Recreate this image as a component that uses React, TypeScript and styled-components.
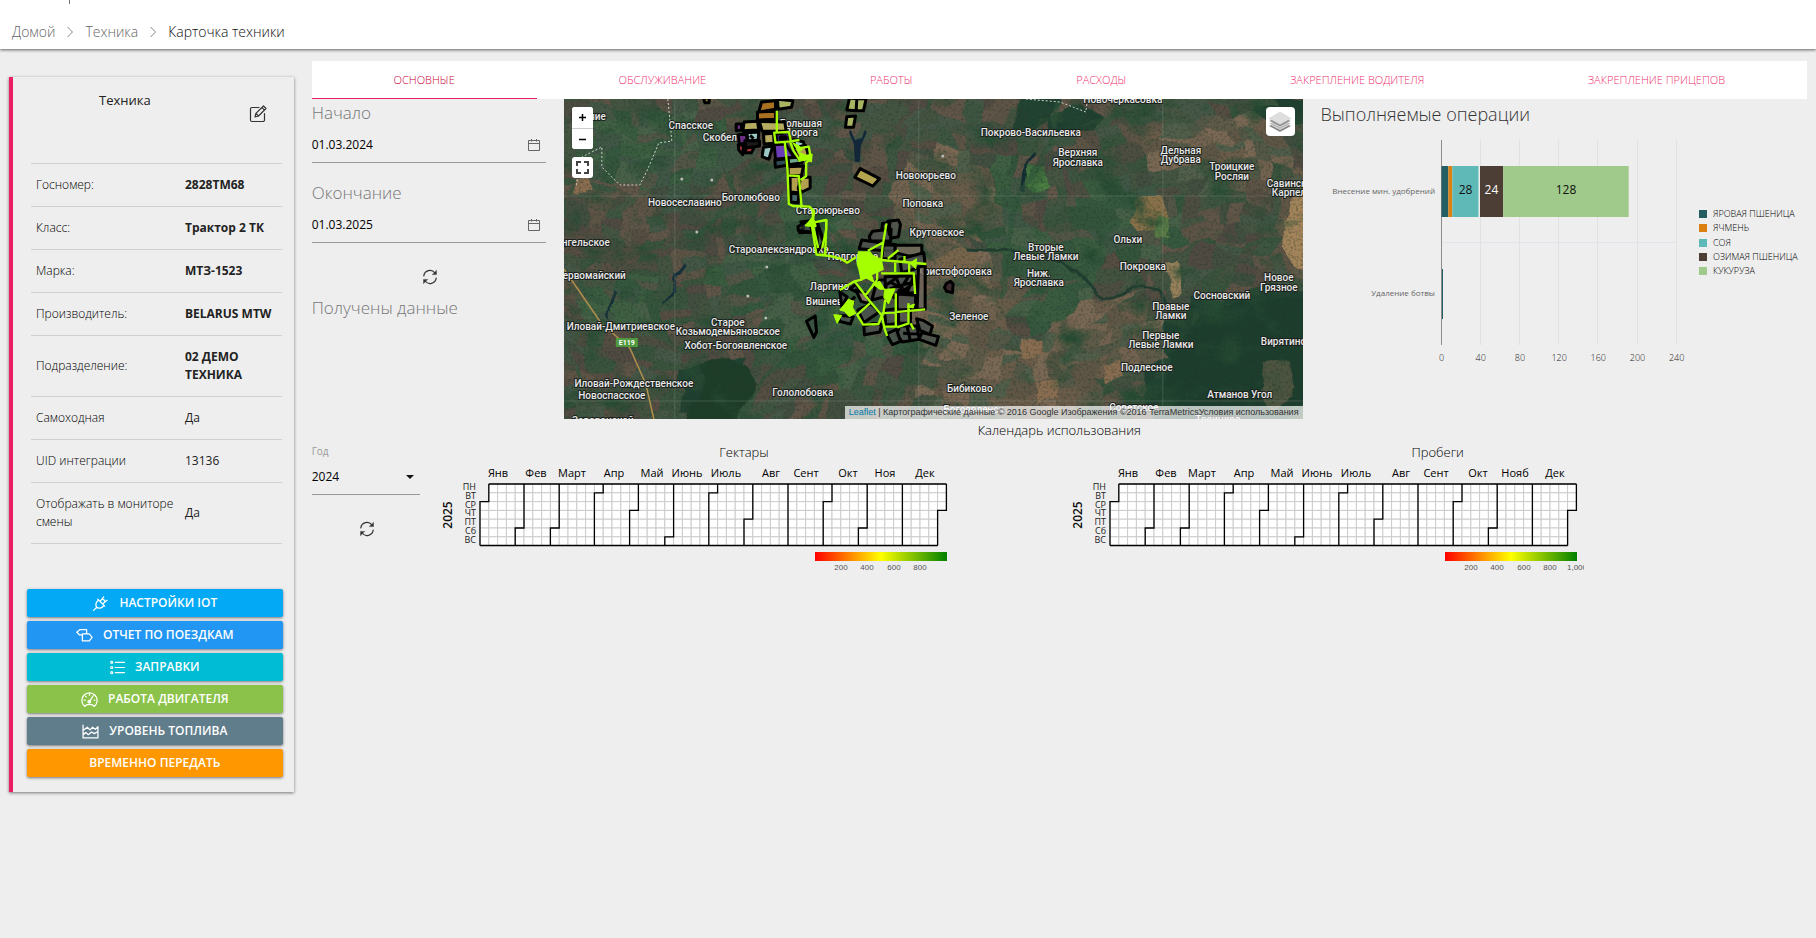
import React from "react";
import styled, { createGlobalStyle } from "styled-components";

const GlobalStyle = createGlobalStyle`
  *, *::before, *::after { box-sizing: border-box; }
  body {
    margin: 0;
    background: #eeeeee;
    color: #212121;
    font-family: "Open Sans", "Noto Sans", sans-serif;
    font-size: 12px;
    line-height: 18px;
  }
  button, input, select { font: inherit; color: inherit; }
  h1, h2, h3, p { margin: 0; font-weight: 400; }
`;

/* ---------- page frame ---------- */

const TopBar = styled.header`
  position: relative;
  height: 49px;
  padding: 15px 12px 0;
  background: #fff;
  box-shadow: 0 1px 3px rgba(0, 0, 0, 0.6);
`;

const ScrolledMark = styled.span`
  position: absolute;
  top: 0;
  left: 69px;
  width: 1px;
  height: 4px;
  background: #777;
`;

const Crumbs = styled.nav`
  display: flex;
  align-items: center;
  gap: 11px;
  height: 34px;
  font-size: 14px;
  font-weight: 300;
`;

const Crumb = styled.a<{ $current?: boolean }>`
  color: ${(p) => (p.$current ? "#111" : "#666")};
  text-decoration: none;
`;

const Page = styled.div`
  display: grid;
  grid-template-columns: repeat(12, minmax(0, 1fr));
  column-gap: 18px;
  align-items: start;
  padding: 12px 9px 40px;
`;

const Main = styled.main`
  grid-column: span 10;
`;

const Grid = styled.div`
  display: grid;
  grid-template-columns: repeat(12, minmax(0, 1fr));
  column-gap: 18px;
`;

const Col = styled.section<{ $span: number }>`
  grid-column: span ${(p) => p.$span};
  min-width: 0;
`;

/* ---------- vehicle card ---------- */

const Card = styled.aside`
  grid-column: span 2;
  margin-top: 16px;
  padding: 0 11px 15px 14px;
  border-left: 4px solid #e91e63;
  box-shadow: 0 1px 3px rgba(0, 0, 0, 0.5);
`;

const CardHead = styled.div`
  display: flex;
  justify-content: space-between;
  height: 86px;
  padding: 14px 16px 0 72px;
`;

const CardTitle = styled.h1`
  font-size: 13px;
  line-height: 18px;
`;

const IconButton = styled.button`
  display: block;
  padding: 0;
  border: 0;
  background: none;
  line-height: 0;
  cursor: pointer;
  color: #333;
`;

const EditButton = styled(IconButton)`
  align-self: flex-start;
  margin-top: 14px;
`;

const Details = styled.table`
  width: calc(100% - 5px);
  margin: 0 0 45px 4px;
  border-collapse: collapse;
  table-layout: fixed;
  border-top: 1px solid #cfcfcf;
  tr { border-bottom: 1px solid #cfcfcf; }
  th, td {
    padding: 12px 0 12px 5px;
    color: #000;
    text-align: left;
    font-weight: 300;
    vertical-align: middle;
  }
  th { width: 149px; }
`;

const Value = styled.td<{ $strong?: boolean }>`
  && {
    font-weight: ${(p) => (p.$strong ? 700 : 400)};
    color: #222;
  }
`;

const Actions = styled.div`
  display: grid;
  gap: 4px;
`;

const Action = styled.button<{ $color: string }>`
  display: flex;
  align-items: center;
  justify-content: center;
  gap: 10px;
  height: 28px;
  border: 0;
  border-radius: 2px;
  background: ${(p) => p.$color};
  color: #fff;
  font-size: 12px;
  font-weight: 600;
  box-shadow: 0 1px 3px rgba(0, 0, 0, 0.5);
  cursor: pointer;
`;

/* ---------- tabs ---------- */

const Tabs = styled.div`
  display: flex;
  height: 38px;
  background: #fff;
`;

const Tab = styled.button<{ $active?: boolean }>`
  flex: 1 1 auto;
  padding: 0;
  border: 0;
  border-bottom: 1px solid ${(p) => (p.$active ? "#e91e63" : "transparent")};
  background: none;
  color: ${(p) => (p.$active ? "#c8003a" : "#ee3070")};
  font-size: 11px;
  font-weight: 300;
  cursor: pointer;
`;

/* ---------- form fields ---------- */

const FieldLabel = styled.label`
  display: block;
  color: #777;
  font-size: 17px;
  font-weight: 300;
  line-height: 28px;
`;

const DateRow = styled.div`
  display: flex;
  align-items: center;
  height: 36px;
  margin-bottom: 16px;
  padding-right: 6px;
  border-bottom: 1px solid #999;
`;

const DateInput = styled.input`
  flex: 1;
  min-width: 0;
  padding: 0;
  border: 0;
  background: none;
  outline: 0;
  color: #000;
  font-size: 12px;
`;

const RefreshRow = styled.div`
  display: flex;
  justify-content: center;
  padding: 10px 0 9px 3px;
`;

const Received = styled.p`
  color: #777;
  font-size: 17px;
  font-weight: 300;
  line-height: 28px;
`;

const SmallLabel = styled.label`
  display: block;
  padding-top: 1px;
  color: #999;
  font-size: 10px;
  line-height: 16px;
`;

const SelectBox = styled.div`
  display: flex;
  align-items: center;
  height: 36px;
  padding-right: 6px;
  border-bottom: 1px solid #999;
  margin-bottom: 16px;
`;

const YearSelect = styled.select`
  flex: 1;
  min-width: 0;
  padding: 0;
  border: 0;
  background: none;
  appearance: none;
  outline: 0;
  color: #000;
`;

/* ---------- map ---------- */

const MapFrame = styled.div`
  position: relative;
  height: 320px;
  overflow: hidden;
  background: #33473a;
`;

const MapSvg = styled.svg`
  display: block;
  width: 100%;
  height: 100%;
`;

const MapControls = styled.div`
  position: absolute;
  top: 8px;
  left: 8px;
  display: grid;
  gap: 8px;
`;

const ControlGroup = styled.div`
  display: grid;
  width: 21px;
  border-radius: 3px;
  overflow: hidden;
  background: #fff;
  button + button { border-top: 1px solid #ccc; }
`;

const MapButton = styled.button`
  display: grid;
  place-items: center;
  height: 21px;
  padding: 0;
  border: 0;
  background: #fff;
  cursor: pointer;
`;

const LayersButton = styled.button`
  position: absolute;
  top: 8px;
  right: 8px;
  display: grid;
  place-items: center;
  width: 29px;
  height: 29px;
  padding: 0;
  border: 0;
  border-radius: 4px;
  background: #fff;
  cursor: pointer;
`;

const Attribution = styled.div`
  position: absolute;
  right: 0;
  bottom: 0;
  padding: 0 4px;
  background: rgba(255, 255, 255, 0.7);
  color: #333;
  font: 9px/13px "Liberation Sans", Arial, sans-serif;
  white-space: nowrap;
  a { color: #0078a8; text-decoration: none; }
`;

/* ---------- headings and charts ---------- */

const ChartTitle = styled.h2`
  padding-top: 1px;
  color: #333;
  font-size: 18px;
  font-weight: 300;
  line-height: 28px;
`;

const SectionTitle = styled.h2`
  color: #000;
  font-size: 13px;
  font-weight: 300;
  line-height: 23px;
  text-align: center;
`;

const CalendarTitle = styled.h3`
  color: #000;
  font-size: 13px;
  font-weight: 300;
  line-height: 21px;
  text-align: center;
`;

const ChartSvg = styled.svg`
  display: block;
  max-width: 100%;
`;

/* ---------- icons ---------- */

type Kids = { children: React.ReactNode };

const Line = ({ size = 16, children }: Kids & { size?: number }) => (
  <svg width={size} height={size} viewBox="0 0 16 16" fill="none" stroke="currentColor" strokeWidth="1.2" strokeLinejoin="round" strokeLinecap="round" aria-hidden="true">
    {children}
  </svg>
);

const EditIcon = () => (
  <svg width="18" height="18" viewBox="0 0 18 18" fill="none" stroke="#333" strokeWidth="1.2" strokeLinejoin="round" strokeLinecap="round" aria-hidden="true">
    <path d="M10 2.5H3A1.500 1.500 0 0 0 1.500 4v11A1.500 1.500 0 0 0 3 16.500h11a1.500 1.500 0 0 0 1.500-1.500V8.500" />
    <path d="M6 12l.9-3.600L14.500 1l2.500 2.500-7.500 7.500zM13 2.600l2.500 2.500M6.900 8.400l2.600 2.600" />
  </svg>
);

const CalendarIcon = () => (
  <svg width="12" height="12" viewBox="0 0 12 12" fill="none" stroke="#666" aria-hidden="true">
    <path d="M.5 1.500h11v10H.500zM.500 4.500h11M3.500 0v2.500M8.500 0v2.500" />
  </svg>
);

const RefreshIcon = () => (
  <Line>
    <path d="M1.800 6.800A6.200 6.200 0 0 1 12.900 4M14.200 9.200A6.200 6.200 0 0 1 3.100 12" />
    <path d="M14.500 1.600v4h-4zM1.500 14.400v-4h4z" fill="currentColor" strokeWidth=".4" />
  </Line>
);

const Caret = () => (
  <svg width="8" height="4" viewBox="0 0 8 4" aria-hidden="true">
    <path d="M0 0h8L4 4z" fill="#111" />
  </svg>
);

const Chevron = () => (
  <svg width="8" height="12" viewBox="0 0 8 12" fill="none" stroke="#888" aria-hidden="true">
    <path d="M1.500 1l5 5-5 5" />
  </svg>
);

const PlugIcon = () => (
  <Line size={17}>
    <path d="M1.500 14.500l3-3M5.500 4l6.500 6.500M6.300 4.800C3.400 6.500 3 9.500 4.500 11.500c2 1.500 5 1.100 6.700-1.800M8 5.600l3-3.800M10.400 8l3.800-3M10 4c1.200.2 2 1 2.200 2.200" />
  </Line>
);

const SignsIcon = () => (
  <Line size={17}>
    <path d="M10 6V2.500H3.500L.8 5l2.700 2.500H6M6 6.500h6.500l2.700 3.200-2.700 3.300H6z" />
  </Line>
);

const ListIcon = () => (
  <Line size={15}>
    <path d="M5.500 2.500h10M5.500 8h10M5.500 13.500h10" />
    <circle cx="1.800" cy="2.500" r="1.100" />
    <circle cx="1.800" cy="8" r="1.100" />
    <circle cx="1.800" cy="13.500" r="1.100" />
  </Line>
);

const GaugeIcon = () => (
  <Line size={17}>
    <path d="M3.500 14.500a7.200 7.200 0 1 1 9 0c-1-1.500-2.500-2-4.500-2s-3.500.5-4.500 2zM8 10l3.500-5.500M3 8.500h1M12.500 8.500h.6M4.500 5l.5.500M8 3v1" />
    <circle cx="7.800" cy="10" r="1.200" />
  </Line>
);

const AreaIcon = () => (
  <Line size={17}>
    <path d="M1 2v12h14V3.500L12.500 6l-2.500-2-2.500 2.500L5 4 1 7M1 11l2.500-2L6 11l3-2.500 2.500 1.500L15 8" />
  </Line>
);

/* ---------- vehicle data ---------- */

const details: { label: string; value: string; strong?: boolean }[] = [
  { label: "Госномер:", value: "2828TM68", strong: true },
  { label: "Класс:", value: "Трактор 2 ТК", strong: true },
  { label: "Марка:", value: "МТЗ-1523", strong: true },
  { label: "Производитель:", value: "BELARUS MTW", strong: true },
  { label: "Подразделение:", value: "02 ДЕМО ТЕХНИКА", strong: true },
  { label: "Самоходная", value: "Да" },
  { label: "UID интеграции", value: "13136" },
  { label: "Отображать в мониторе смены", value: "Да" },
];

const actions = [
  { text: "НАСТРОЙКИ IOT", color: "#03a9f4", icon: <PlugIcon /> },
  { text: "ОТЧЕТ ПО ПОЕЗДКАМ", color: "#2196f3", icon: <SignsIcon /> },
  { text: "ЗАПРАВКИ", color: "#00bcd4", icon: <ListIcon /> },
  { text: "РАБОТА ДВИГАТЕЛЯ", color: "#8bc34a", icon: <GaugeIcon /> },
  { text: "УРОВЕНЬ ТОПЛИВА", color: "#607d8b", icon: <AreaIcon /> },
  { text: "ВРЕМЕННО ПЕРЕДАТЬ", color: "#ff9800", icon: null },
];

const tabs = ["ОСНОВНЫЕ", "ОБСЛУЖИВАНИЕ", "РАБОТЫ", "РАСХОДЫ", "ЗАКРЕПЛЕНИЕ ВОДИТЕЛЯ", "ЗАКРЕПЛЕНИЕ ПРИЦЕПОВ"];

/* ---------- satellite ground ---------- */

const makeRandom = (seed: number) => () => {
  seed = (seed * 1664525 + 1013904223) % 4294967296;
  return seed / 4294967296;
};

const woods = [
  [700, 225, 60, 34], [655, 240, 60, 46], [640, 285, 70, 44], [715, 290, 30, 24],
  [513, 20, 32, 16], [475, 14, 18, 12], [150, 292, 30, 34], [728, 10, 40, 14],
];
const meadows = [
  [90, 50, 80, 45], [480, 180, 60, 50], [270, 230, 70, 50], [200, 180, 50, 40],
  [560, 120, 60, 40], [250, 120, 30, 30], [440, 120, 20, 60], [60, 210, 50, 30],
];
const drylands = [
  [392, 205, 60, 60], [545, 240, 60, 40], [650, 50, 70, 40], [450, 290, 90, 40],
  [385, 100, 50, 50], [735, 120, 14, 60],
];
const within = (list: number[][], x: number, y: number) =>
  list.some(([cx, cy, rx, ry]) => ((x - cx) / rx) ** 2 + ((y - cy) / ry) ** 2 < 1);

const woodTones = ["#1f4030", "#214332", "#234130", "#284833"];
const meadowTones = ["#36583f", "#3a5c3f", "#34543b", "#406043", "#486048", "#405746", "#535646"];
const dryTones = ["#6b5c4a", "#73624f", "#605646", "#555847", "#7a6854", "#515e4a", "#605b49"];
const mixTones = ["#445340", "#4d4e41", "#574d42", "#3e5641", "#3a533d", "#5e5446", "#465747", "#514a42", "#424e40", "#615548", "#455542"];

const buildGround = () => {
  const random = makeRandom(4211);
  const stepX = 21;
  const stepY = 15;
  const cols = Math.ceil(739 / stepX) + 5;
  const rows = Math.ceil(320 / stepY) + 6;
  const points: number[][][] = [];
  for (let r = 0; r <= rows; r++) {
    const line: number[][] = [];
    for (let c = 0; c <= cols; c++) {
      const x = (c - 2) * stepX;
      const y = (r - 3) * stepY;
      line.push([
        x + (random() - 0.5) * 15 + Math.sin(y / 40 + x / 130) * 12,
        y + (random() - 0.5) * 11 + Math.sin(x / 60) * 12,
      ]);
    }
    points.push(line);
  }
  const cells: { d: string; fill: string }[] = [];
  for (let r = 0; r < rows; r++) {
    for (let c = 0; c < cols; c++) {
      const a = points[r][c];
      const b = points[r][c + 1];
      const e = points[r + 1][c + 1];
      const f = points[r + 1][c];
      const x = (a[0] + e[0]) / 2;
      const y = (a[1] + e[1]) / 2;
      const tones = within(woods, x, y) ? woodTones : within(drylands, x, y) ? dryTones : within(meadows, x, y) ? meadowTones : mixTones;
      const pick = () => tones[Math.floor(random() * tones.length)];
      const t = 0.3 + random() * 0.4;
      if (random() < 0.35) {
        cells.push({ d: `M${a}L${b}L${e}L${f}Z`, fill: pick() });
      } else if (random() < 0.5) {
        const m = [a[0] + (b[0] - a[0]) * t, a[1] + (b[1] - a[1]) * t];
        const n = [f[0] + (e[0] - f[0]) * t, f[1] + (e[1] - f[1]) * t];
        cells.push({ d: `M${a}L${m}L${n}L${f}Z`, fill: pick() });
        cells.push({ d: `M${m}L${b}L${e}L${n}Z`, fill: pick() });
      } else {
        const m = [a[0] + (f[0] - a[0]) * t, a[1] + (f[1] - a[1]) * t];
        const n = [b[0] + (e[0] - b[0]) * t, b[1] + (e[1] - b[1]) * t];
        cells.push({ d: `M${a}L${b}L${n}L${m}Z`, fill: pick() });
        cells.push({ d: `M${m}L${n}L${e}L${f}Z`, fill: pick() });
      }
    }
  }
  return cells;
};
const ground = buildGround();

type Place = [number, number, string, ("start" | "end")?];
const places: Place[] = [
  [25, 21, "Волчие"], [127, 30, "Спасское"], [139, 42, "Скобелево", "start"], [237, 28, "Большая"], [237, 37, "Дорога"],
  [362, 80, "Новоюрьево"], [187, 102, "Боголюбово"], [121, 107, "Новосеславино"], [264, 115, "Староюрьево"],
  [359, 108, "Поповка"], [373, 137, "Крутовское"], [46, 147, "Архангельское", "end"], [62, 180, "Первомайский", "end"],
  [215, 154, "Староалександровка"], [289, 161, "Подгорное"], [428, 176, "Христофоровка", "end"],
  [246, 191, "Ларгино", "start"], [242, 206, "Вишневое", "start"], [164, 227, "Старое"], [164, 236, "Козьмодемьяновское"],
  [172, 250, "Хобот-Богоявленское"], [57, 231, "Иловай-Дмитриевское"], [70, 288, "Иловай-Рождественское"],
  [48, 300, "Новоспасское"], [239, 297, "Гололобовка"], [39, 325, "Заворонской"], [559, 4, "Новочеркасовка"],
  [467, 37, "Покрово-Васильевка"], [514, 57, "Верхняя"], [514, 67, "Ярославка"], [617, 55, "Дельная"], [617, 64, "Дубрава"],
  [668, 71, "Троицкие"], [668, 81, "Росляи"], [703, 88, "Савинские", "start"], [708, 97, "Карпели", "start"],
  [564, 144, "Ольхи"], [482, 152, "Вторые"], [482, 161, "Левые Ламки"], [579, 171, "Покровка"], [475, 178, "Ниж."],
  [475, 187, "Ярославка"], [715, 182, "Новое"], [715, 192, "Грязное"], [658, 200, "Сосновский"], [607, 211, "Правые"],
  [607, 220, "Ламки"], [597, 240, "Первые"], [597, 249, "Левые Ламки"], [405, 221, "Зеленое"], [697, 246, "Вирятино", "start"],
  [583, 272, "Подлесное"], [406, 293, "Бибиково"], [676, 299, "Атманов Угол"], [410, 314, "Богоявленск"],
  [570, 312, "Советское"], [654, 324, "Троицкое"],
];

const FieldMap = () => (
  <MapSvg viewBox="0 0 739 320" preserveAspectRatio="xMidYMid slice" role="img" aria-label="Карта">
    <defs>
      <filter id="terrain" x="0" y="0" width="100%" height="100%" colorInterpolationFilters="sRGB">
        <feTurbulence type="fractalNoise" baseFrequency="0.04" numOctaves="3" seed="5" result="warp" />
        <feDisplacementMap in="SourceGraphic" in2="warp" scale="12" xChannelSelector="R" yChannelSelector="G" result="fields" />
        <feTurbulence type="fractalNoise" baseFrequency="0.025 0.035" numOctaves="5" seed="21" />
        <feColorMatrix values="0 0 0 0 0.15  0 0 0 0 0.3  0 0 0 0 0.2  0 3 0 0 -1.6" result="scrub" />
        <feTurbulence type="fractalNoise" baseFrequency="0.4" numOctaves="2" seed="9" />
        <feColorMatrix values="0 0 0 0 0.12  0 0 0 0 0.2  0 0 0 0 0.15  0 1.2 0 0 -0.56" result="grain" />
        <feMerge>
          <feMergeNode in="fields" />
          <feMergeNode in="scrub" />
          <feMergeNode in="grain" />
        </feMerge>
      </filter>
    </defs>
    <g filter="url(#terrain)">
      <rect x="-20" y="-20" width="780" height="360" fill="#435342" />
      {ground.map((cell, i) => (
        <path key={i} d={cell.d} fill={cell.fill} stroke={cell.fill} strokeWidth=".5" />
      ))}
      <path d="M135 264l30-6 20 12 8 12-6 18-20 32h-46l8-28 14-20z" fill="#1e3d29" />
      <path d="M610 246l30-30 40-14 70-6v100l-60 34h-66l-30-30 10-30z" fill="#1d3d2d" />
      <path d="M700 262l24-2 10 30-24 26-14-20z" fill="#4d5440" />
      <path d="M572 98l26 0 6 20-10 16-20 2-10-14z" fill="#8a7149" />
      <path d="M592 115l12 2 2 22-14 4z" fill="#587a45" />
      <path d="M600 165l14-2 4 30-10 8z" fill="#96805a" />
      <path d="M727 100l16-8v80l-14-4-12-20z" fill="#a3845a" />
      <path d="M464 66l16 2 6 18-16 6-8-8z" fill="#4b7d42" />
      <path d="M372 158l26-10 14 8-4 14-30 4z" fill="#79654c" />
      <path d="M456 236l20 4 4 16-20 4zM470 286l22-4 2 18-20 4zM540 266l14-2 4 16-16 2zM10 82l14-4 6 14-18 4z" fill="#8a6d51" />
      <path d="M100 206l8-10 4-20 10-12M44 220l8-30" fill="none" stroke="#16303a" strokeWidth="3" />
      <path d="M404 150c40 2 50 0 80 8s36 20 46 32 24 10 36 2 20-8 34 8 20 12 32 8" fill="none" stroke="#203d30" strokeWidth="3" />
      <path d="M460 92l4-30 8-10" fill="none" stroke="#132c33" strokeWidth="4" />
      <path d="M440 200c10-60 0-80 20-110s40-50 30-90M180 320c20-60 60-80 120-90M120 140c60-30 80-70 140-80M236 90c10 20 30 30 44 60" fill="none" stroke="#2f553b" strokeWidth="5" opacity=".6" />
    </g>
    <path d="M111 0v320M0 97h739M0 302h739M355 0v320M599 0v320" stroke="#8fa095" strokeOpacity=".28" fill="none" />
    <path d="M104 0l4 42-13 2-11 26-8 16-20 0-18-18V48l-20 10-6 30" fill="none" stroke="#c9d0c8" strokeDasharray="2 2" />
    <path d="M462 0l34 3 26 10 1-8" fill="none" stroke="#c9d0c8" strokeDasharray="2 2" />
    <path d="M0 170l38 55 28 24 16 36 8 35" fill="none" stroke="#b08f4b" strokeWidth="1.500" />
    {[[148, 81], [203, 168], [202, 219], [184, 197], [118, 80], [379, 57], [133, 133]].map(([x, y]) => (
      <circle key={`${x}-${y}`} cx={x} cy={y} r="1.500" fill="#b9bdb4" />
    ))}

    <g fontFamily="Roboto, sans-serif" fontSize="10" fontWeight="500" fill="#e8e8e8" stroke="#1b211d" strokeWidth="2" strokeLinejoin="round" paintOrder="stroke">
      {places.map(([x, y, name, anchor], i) => (
        <text key={i} x={x} y={y} textAnchor={anchor ?? "middle"}>{name}</text>
      ))}
    </g>
    <rect x="52" y="239" width="22" height="9" fill="#4f9a3f" />
    <text x="63" y="246" textAnchor="middle" fontFamily="Roboto, sans-serif" fontWeight="700" fontSize="7" fill="#fff">E119</text>

    {/* field outlines of the northern cluster */}
    <g transform="translate(161 -1) scale(.3333)" stroke="#000" strokeWidth="9" strokeLinejoin="round">
      <path d="M110 12L152 8l0 26-50 8zM98 42l54-2v24l-54 2z" fill="#a9701f" />
      <path d="M158 4l46 4-4 20-40 6zM374 0l22 2-2 36-28-2zM396 2l28 0-8 36-22 0zM366 56l26-2-6 34-24 0z" fill="#a9b462" />
      <path d="M-64 0l18 0-2 14-12 0z" fill="#a08a3a" />
      <path d="M58 72l40-2 4 26-48 2zM104 70l76 2 4 28-72 0zM116 108l30-2 2 30-30 2z" fill="#b5ac5f" />
      <path d="M34 78l16 0 0 18-16 2zM40 110l24-4 4 26-24 8z" fill="#6d2f86" />
      <path d="M66 104l36-2-2 24-30 4zM116 148l28-4-12 40-20-8zM206 124l30 8 4 22-28-4z" fill="#9dc9c5" />
      <path d="M40 140l16 2-2 28-12-14zM66 142l22 6-8 16-20 0z" fill="#a83a3a" />
      <path d="M60 128l44 0 0 16-40 6zM76 112l10 10" fill="#1a1a1a" />
      <path d="M148 140l34-2 26 40-56 6z" fill="#6a3cb8" />
      <path d="M154 108l38-4 4 26-40 4z" fill="#5a34a8" />
      <path d="M166 116l18 0 0 8-18 0z" fill="#111" />
      <path d="M150 186l34-4 2 20-34 6z" fill="#2f4a55" />
      <path d="M190 180l46-4-4 18-40 6z" fill="#6fa98d" />
      <path d="M206 150l36-8 10 34-30 8zM190 206l46-2-6 28-40 2zM228 238l28 0 0 32-24 12-12-10zM196 236l28-2-2 50-26-2z" fill="#b3a04e" />
      <path d="M198 286l24 2-2 26-22-2z" fill="#44666a" />
      <path d="M406 212l58 30-20 22-54-26z" fill="#b3a44f" />
      <path d="M228 372l30-4 6 34-40 2 12-14zM222 398l14-6M276 376l22 66" fill="#33463a" fillOpacity=".6" />
    </g>
    <path d="M287 31l4 10 7-2 3-8 2 2-6 14-1 16-5 0-1-18-5-12z" fill="#12283a" />

    {/* field outlines of the southern cluster */}
    <g transform="translate(226 111) scale(.3333)" stroke="#000" strokeWidth="9" strokeLinejoin="round" fill="#4c524e" fillOpacity=".8">
      <path d="M24 50l20-12 18 0 4 28-40-4zM82 36l20 60-20 30z" fillOpacity=".4" />
      <path d="M216 90l56 8 46 6-6 20-104-8zM238 80l10-16 56-6-2 36-60-2zM294 34l32-4 6 14-6 36-20 4-8-12zM278 40l22-2-2 20-22 0z" />
      <path d="M280 104l36 2 0 40-40 0z" />
      <path d="M316 106l80 0 0 30-40 2-40-10z" fill="#7c6e60" />
      <path d="M330 148l72-20 4 40-70 20zM286 200l90-2 4 50-94 4zM262 210l24 0 0 50-40 10z" />
      <path d="M288 226l40-28 44 0-20 50-60 14zM300 216l50 26M320 206l20 46M356 200l-40 60M370 220l-60 46M300 236l70-20" />
      <path d="M386 170l20-2 0 130-24 0z" fill="#6f655c" />
      <path d="M322 252l56 4-2 42-54 2zM284 300l40-4 0 44-36 6zM326 304l36 0 0 36-36 0z" />
      <path d="M380 326l22 6 26 16-8 26-30-14zM396 368l50 12-8 26-50-18zM330 348l52 0 6 40-50 8-18-22zM340 370l46 2M352 350l10 44" />
      <path d="M222 348l30-8 24 4-6 22-46 8zM290 372l30-14 12 36-24 10zM204 300l40-18 24 24-46 32z" />
      <path d="M150 246l22 14-16 30zM180 236l20-14 12 30zM150 316l40 4-8 22-34-8zM156 300l40-40" />
      <path d="M198 240l30 10 14 32-28-8z" fill="#9a7f6e" />
      <path d="M76 318l4 48-8 16-22-48z" fillOpacity=".4" />
      <path d="M470 220l12-6 8 8-2 26-18-4-6-12z" fill="#3a1f2c" />
    </g>

    {/* travelled track */}
    <g transform="translate(161 -1) scale(.3333)" stroke="#a6ff00" strokeWidth="7" strokeLinejoin="round" fill="none">
      <path d="M156 38v66M148 104l44-2 6 28-46 4zM180 134l8 80 4 104 12 6 50 2 14 14-4 30M190 232l32 2 8 88M194 130l30-4M214 152l38-6 6 36-14 12v40l-16 12M196 132l10 26 18 28M254 372l10-14 0-20M264 374l40-8 0 30-12 54M264 380l16 70" />
      <path d="M204 134l20 10 8 12-12 6 24 10 18-4-2 24-14-6-24 4 4-20z" fill="#a6ff00" strokeWidth="3" />
      <path d="M244 382l20-20 8 22z" fill="#a6ff00" />
    </g>
    <g transform="translate(226 111) scale(.3333)" stroke="#a6ff00" strokeWidth="7" strokeLinejoin="round" fill="none">
      <path d="M64 34l16 100 26 0 4-106M80 134l40 4 34 8 18 12 26-16M290 40l-12 70-4 44M278 98l-44 24M274 150l136 12M274 190l98 0 4 62M316 156v30M358 160v28M294 146l32-26M344 138v18M262 150v60M150 240l44-26 24-6M194 214l46 60 36 42-10 26-46 2-18-30 38-34M262 210l-38 50M276 310l130-12M276 316l8 40 8 22M286 270l-6 46M318 250v100l-36 0M356 280v60l-34 12M362 340l10 18" />
      <path d="M206 126l34 0 8 10 26 12 6 30-22 10-14 6 8 22-22-12-16 6-6-30-6-20z" fill="#a6ff00" strokeWidth="4" />
      <path d="M248 222l22-8 14 24-14 0zM284 238l32-2-20 46-14-20zM132 314l24 2-14 24zM150 300l26-32 16 6-4 18 10 18-20 10-14-16zM360 160l20-14-2 30zM352 290l22-8-4 12z" fill="#a6ff00" strokeWidth="3" />
    </g>
  </MapSvg>
);

/* ---------- operations chart ---------- */

const crops = [
  { name: "ЯРОВАЯ ПШЕНИЦА", color: "#235e63", from: 0, to: 7 },
  { name: "ЯЧМЕНЬ", color: "#dd8012", from: 7, to: 11 },
  { name: "СОЯ", color: "#5fb9b7", from: 11, to: 38, text: "28", ink: "#111" },
  { name: "ОЗИМАЯ ПШЕНИЦА", color: "#4c3d35", from: 39, to: 63, text: "24", ink: "#fff" },
  { name: "КУКУРУЗА", color: "#a0ca8b", from: 63, to: 191, text: "128", ink: "#111" },
];
const axisX = (v: number) => 120.5 + v * 0.98;

const OperationsChart = () => (
  <ChartSvg width="486" height="240" viewBox="0 0 486 240" role="img" aria-label="Выполняемые операции">
    {[40, 80, 120, 160, 200, 240].map((v) => (
      <path key={v} d={`M${Math.round(axisX(v)) - 0.5} 12v205`} stroke="#dfe1e2" />
    ))}
    <path d="M121 114.500h235" stroke="#dfe5ea" />
    <path d="M120.500 12v205" stroke="#8c8c8c" />
    {crops.map((c) => (
      <rect key={c.name} x={axisX(c.from)} y="38" width={(c.to - c.from) * 0.98} height="51" fill={c.color} />
    ))}
    <rect x={axisX(38)} y="38" width="1" height="51" fill="#fff" />
    <rect x="121" y="141" width="1" height="50" fill="#235e63" />
    <g fontSize="12" textAnchor="middle">
      {crops.filter((c) => c.text).map((c) => (
        <text key={c.name} x={axisX((c.from + c.to) / 2)} y="66" fill={c.ink}>{c.text}</text>
      ))}
    </g>
    <g fontSize="8" textAnchor="end" fill="#666">
      <text x="114" y="66">Внесение мин. удобрений</text>
      <text x="114" y="168">Удаление ботвы</text>
    </g>
    <g fontSize="9" fontWeight="300" textAnchor="middle" fill="#222">
      {[0, 40, 80, 120, 160, 200, 240].map((v) => (
        <text key={v} x={axisX(v)} y="233">{v}</text>
      ))}
    </g>
    {crops.map((c, i) => (
      <g key={c.name} transform={`translate(378 ${82 + Math.round(i * 14.3)})`}>
        <rect width="8" height="8" fill={c.color} />
        <text x="14" y="7" fontSize="9" fontWeight="300" fill="#000">{c.name}</text>
      </g>
    ))}
  </ChartSvg>
);

/* ---------- usage calendars ---------- */

const CELL = 8.8;
const LEFT = 42;
const TOP = 21;
const weekdays = ["ПН", "ВТ", "СР", "ЧТ", "ПТ", "Сб", "ВС"];
const monthCentres = [60, 98, 134, 176, 214, 249, 288, 333, 368, 410, 447, 487];
const monthLengths = [31, 28, 31, 30, 31, 30, 31, 31, 30, 31, 30, 31];
const firstSlot = 2; // 1 January 2025 is a Wednesday

const monthEdge = (slot: number) => {
  const col = Math.floor(slot / 7);
  const row = slot % 7;
  const x = LEFT + col * CELL;
  const bottom = TOP + 7 * CELL;
  if (row === 0) return `M${x} ${TOP}V${bottom}`;
  return `M${x + CELL} ${TOP}V${TOP + row * CELL}H${x}V${bottom}`;
};
const edges: string[] = [];
monthLengths.reduce((slot, days) => {
  edges.push(monthEdge(slot));
  return slot + days;
}, firstSlot);
edges.push(monthEdge(firstSlot + 365));

const UsageCalendar = ({ id, months, ticks }: { id: string; months: string[]; ticks: string[] }) => (
  <ChartSvg width="516" height="115" viewBox="0 0 516 115" preserveAspectRatio="xMinYMin" role="img" aria-label={id}>
    <defs>
      <linearGradient id={id}>
        <stop offset="0" stopColor="#f00" />
        <stop offset=".5" stopColor="#ff0" />
        <stop offset="1" stopColor="#008000" />
      </linearGradient>
    </defs>
    <g fontSize="11" textAnchor="middle" fill="#000">
      {months.map((m, i) => <text key={m} x={monthCentres[i]} y="14">{m}</text>)}
    </g>
    <g fontSize="9" textAnchor="end" fill="#222">
      {weekdays.map((d, i) => <text key={d} x="38" y={Math.round(TOP + 6 + i * CELL)}>{d}</text>)}
    </g>
    <text transform="translate(14 52) rotate(-90)" textAnchor="middle" fontSize="12" fontWeight="600" fill="#111">2025</text>
    {Array.from({ length: 365 }, (_, d) => {
      const slot = d + firstSlot;
      return (
        <rect key={d} x={LEFT + Math.floor(slot / 7) * CELL} y={TOP + (slot % 7) * CELL} width={CELL} height={CELL} fill="#fff" stroke="#ccc" />
      );
    })}
    <path d={edges.join("")} fill="none" stroke="#000" strokeWidth="1.300" />
    <path d={`M${LEFT + CELL} ${TOP}H${LEFT + 53 * CELL}M${LEFT} ${TOP + 7 * CELL}H${LEFT + 52 * CELL}`} stroke="#000" strokeWidth="1.500" />
    <rect x="377" y="89" width="132" height="9" fill={`url(#${id})`} />
    <g fontFamily="Liberation Sans, Arial, sans-serif" fontSize="8" textAnchor="middle" fill="#555">
      {ticks.map((t, i) => <text key={t} x={403 + Math.round(i * 26.4)} y="107">{t}</text>)}
    </g>
  </ChartSvg>
);

const monthsArea = ["Янв", "Фев", "Март", "Апр", "Май", "Июнь", "Июль", "Авг", "Сент", "Окт", "Ноя", "Дек"];
const monthsRun = monthsArea.map((m) => (m === "Ноя" ? "Нояб" : m));

/* ---------- page ---------- */

const DateField = ({ id, label, value }: { id: string; label: string; value: string }) => (
  <>
    <FieldLabel htmlFor={id}>{label}</FieldLabel>
    <DateRow>
      <DateInput id={id} defaultValue={value} />
      <IconButton type="button" aria-label="Выбрать дату"><CalendarIcon /></IconButton>
    </DateRow>
  </>
);

export default function App() {
  return (
    <>
      <GlobalStyle />
      <TopBar>
        <ScrolledMark aria-hidden="true" />
        <Crumbs>
          <Crumb href="#home">Домой</Crumb>
          <Chevron />
          <Crumb href="#machines">Техника</Crumb>
          <Chevron />
          <Crumb href="#card" $current>Карточка техники</Crumb>
        </Crumbs>
      </TopBar>
      <Page>
        <Card>
          <CardHead>
            <CardTitle>Техника</CardTitle>
            <EditButton type="button" aria-label="Редактировать"><EditIcon /></EditButton>
          </CardHead>
          <Details>
            <tbody>
              {details.map((d) => (
                <tr key={d.label}>
                  <th scope="row">{d.label}</th>
                  <Value $strong={d.strong}>{d.value}</Value>
                </tr>
              ))}
            </tbody>
          </Details>
          <Actions>
            {actions.map((a) => (
              <Action key={a.text} type="button" $color={a.color}>
                {a.icon}
                {a.text}
              </Action>
            ))}
          </Actions>
        </Card>
        <Main>
          <Tabs role="tablist">
            {tabs.map((t, i) => (
              <Tab key={t} type="button" role="tab" aria-selected={i === 0} $active={i === 0}>{t}</Tab>
            ))}
          </Tabs>
          <Grid>
            <Col $span={2}>
              <DateField id="date-from" label="Начало" value="01.03.2024" />
              <DateField id="date-to" label="Окончание" value="01.03.2025" />
              <RefreshRow>
                <IconButton type="button" aria-label="Обновить"><RefreshIcon /></IconButton>
              </RefreshRow>
              <Received>Получены данные</Received>
            </Col>
            <Col $span={6}>
              <MapFrame>
                <FieldMap />
                <MapControls>
                  <ControlGroup>
                    <MapButton type="button" aria-label="Приблизить">
                      <svg width="9" height="9" stroke="#000" strokeWidth="1.500"><path d="M1 4.500h7M4.500 1v7" /></svg>
                    </MapButton>
                    <MapButton type="button" aria-label="Отдалить">
                      <svg width="9" height="9" stroke="#000" strokeWidth="1.500"><path d="M1 4.500h7" /></svg>
                    </MapButton>
                  </ControlGroup>
                  <ControlGroup>
                    <MapButton type="button" aria-label="Во весь экран">
                      <svg width="13" height="13" fill="none" stroke="#444" strokeWidth="2"><path d="M1 5V1h4M8 1h4v4M12 8v4H8M5 12H1V8" /></svg>
                    </MapButton>
                  </ControlGroup>
                </MapControls>
                <LayersButton type="button" aria-label="Слои">
                  <svg width="22" height="20" viewBox="0 0 22 20">
                    <path d="M0 14l11-5 11 5-11 6z" fill="#8a8a8a" />
                    <path d="M0 11.500l11-5 11 5-11 6z" fill="#b5b5b5" stroke="#fff" strokeWidth=".6" />
                    <path d="M0 9l11-6 11 6-11 6z" fill="#8f8f8f" stroke="#fff" strokeWidth=".6" />
                    <path d="M0 6.500L11 0l11 6.500-11 6z" fill="#dedede" stroke="#c5c5c5" strokeWidth=".4" />
                  </svg>
                </LayersButton>
                <Attribution>
                  <a href="#leaflet">Leaflet</a> | Картографические данные © 2016 Google Изображения ©2016 TerraMetricsУсловия использования
                </Attribution>
              </MapFrame>
            </Col>
            <Col $span={4}>
              <ChartTitle>Выполняемые операции</ChartTitle>
              <OperationsChart />
            </Col>
          </Grid>
          <SectionTitle>Календарь использования</SectionTitle>
          <Grid>
            <Col $span={1}>
              <SmallLabel htmlFor="year">Год</SmallLabel>
              <SelectBox>
                <YearSelect id="year" defaultValue="2024">
                  <option>2024</option>
                  <option>2025</option>
                </YearSelect>
                <Caret />
              </SelectBox>
              <RefreshRow>
                <IconButton type="button" aria-label="Обновить календарь"><RefreshIcon /></IconButton>
              </RefreshRow>
            </Col>
            <Col $span={5}>
              <CalendarTitle>Гектары</CalendarTitle>
              <UsageCalendar id="hectares" months={monthsArea} ticks={["200", "400", "600", "800"]} />
            </Col>
            <Col $span={6}>
              <CalendarTitle>Пробеги</CalendarTitle>
              <UsageCalendar id="mileage" months={monthsRun} ticks={["200", "400", "600", "800", "1,000"]} />
            </Col>
          </Grid>
        </Main>
      </Page>
    </>
  );
}
